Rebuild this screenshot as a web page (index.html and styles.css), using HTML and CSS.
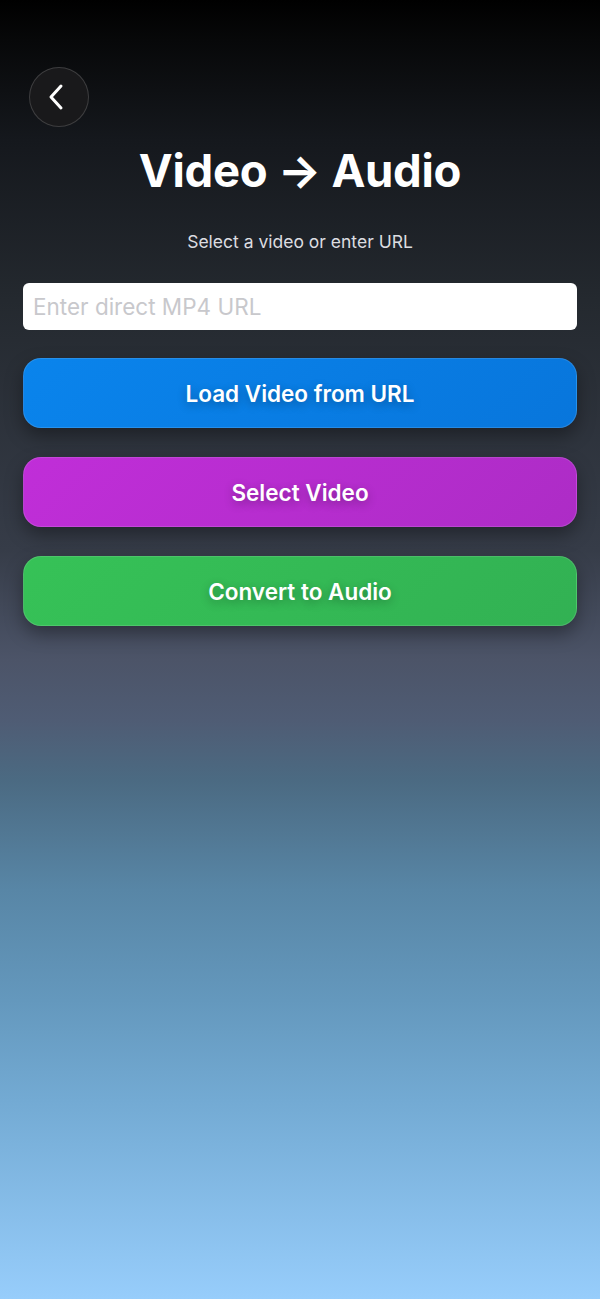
FILE: index.html
```html
<!DOCTYPE html>
<html lang="en">
<head>
  <meta charset="UTF-8">
  <title>Video to Audio</title>
  <meta name="viewport" content="width=device-width, initial-scale=1.0">
  <link rel="stylesheet" href="styles.css">
</head>
<body>

  <div class="screen">
    <button class="back-btn" aria-label="Back">
      <svg width="22" height="30" viewBox="0 0 22 30">
        <path d="M15 4 L5 15 L15 26" fill="none" stroke="#fff" stroke-width="3" stroke-linecap="round" stroke-linejoin="round"/>
      </svg>
    </button>

    <h1>Video → Audio</h1>
    <p class="subtitle">Select a video or enter URL</p>

    <input type="text" class="url-input" placeholder="Enter direct MP4 URL">

    <div class="actions">
      <button class="action blue">Load Video from URL</button>
      <button class="action purple">Select Video</button>
      <button class="action green">Convert to Audio</button>
    </div>
  </div>

</body>
</html>
```

FILE: styles.css
```css
* {
  box-sizing: border-box;
}

body {
  margin: 0;
  min-height: 1299px;
  font-family: Inter, 'Noto Sans', sans-serif;
  color: white;
  background: linear-gradient(180deg,
    #000000 0px,
    #070809 40px,
    #15181d 140px,
    #24292f 300px,
    #363c48 550px,
    #4c5468 660px,
    #4f5c74 720px,
    #4b6a82 780px,
    #5886a6 890px,
    #6498bd 1000px,
    #73aad3 1100px,
    #97cdfb 1299px);
}

.screen {
  display: flex;
  flex-direction: column;
  padding: 67px 23px 0;
}

.back-btn {
  width: 60px;
  height: 60px;
  margin-left: 6px;
  border-radius: 50%;
  background: #19191b;
  border: 1px solid rgba(255, 255, 255, 0.16);
  display: flex;
  align-items: center;
  justify-content: center;
  padding: 0 4px 0 0;
}

h1 {
  margin: 12px 0 0;
  font-size: 45.5px;
  font-weight: 700;
  line-height: 64px;
  text-align: center;
  letter-spacing: -0.3px;
}

.subtitle {
  margin: 28px 0 0;
  font-size: 17.5px;
  line-height: 22px;
  text-align: center;
  color: #dcdde0;
}

.url-input {
  margin-top: 30px;
  height: 47px;
  width: 100%;
  border: none;
  border-radius: 6px;
  padding: 0 10px;
  font-family: inherit;
  font-size: 22.5px;
  background: #ffffff;
  color: #333;
}

.url-input::placeholder {
  color: #c8c8cc;
}

.actions {
  display: flex;
  flex-direction: column;
  gap: 29px;
  margin-top: 28px;
}

.action {
  height: 70px;
  width: 100%;
  border: 1px solid rgba(255, 255, 255, 0.12);
  border-radius: 18px;
  font-family: inherit;
  font-size: 22.5px;
  font-weight: 600;
  color: white;
  text-shadow: 0 3px 10px rgba(0, 0, 0, 0.3);
  box-shadow: 0 8px 18px rgba(0, 0, 0, 0.35);
  cursor: pointer;
}

.blue {
  background: linear-gradient(135deg, #0a84ec, #0876dc);
}

.purple {
  background: linear-gradient(135deg, #c02ed8, #ad2cc6);
}

.green {
  background: linear-gradient(135deg, #36c257, #32b153);
}
```
